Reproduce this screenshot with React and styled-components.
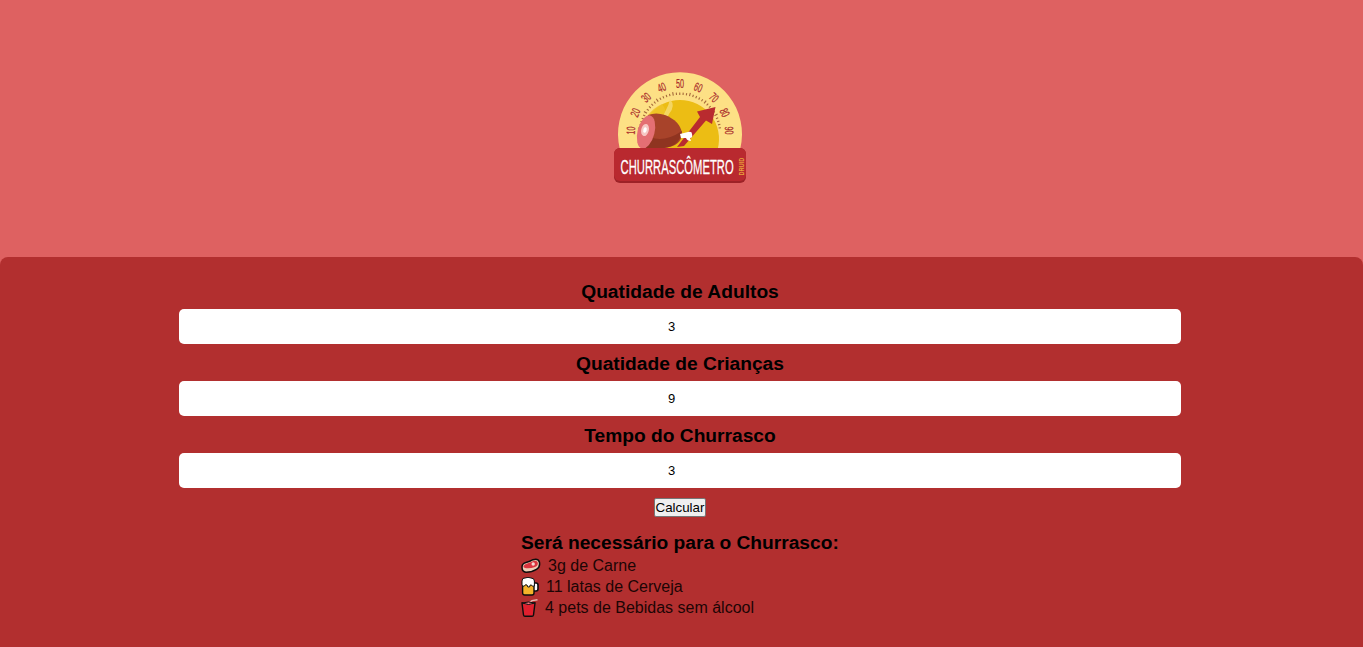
import React from "react";
import styled, { createGlobalStyle } from "styled-components";

const Global = createGlobalStyle`
  html, body { margin: 0; padding: 0; background: #de6161; }
  body { font-family: "Liberation Sans", Arial, sans-serif; color: #000; overflow: hidden; }
`;
const Page = styled.div`
  display: flex;
  flex-direction: column;
  height: 647px;
`;
const Header = styled.header`
  height: 257px;
  flex: none;
  display: flex;
  justify-content: center;
  align-items: flex-start;
  padding: 68px 3px 0 0;
  box-sizing: border-box;
`;
const Main = styled.main`
  flex: 1;
  background: #b22f2f;
  border-radius: 8px 8px 0 0;
  padding: 24px 182px 0 179px;
  display: flex;
  flex-direction: column;
  align-items: center;
`;
const Form = styled.form`
  width: 100%;
  display: flex;
  flex-direction: column;
  align-items: center;
`;
const Label = styled.label`
  font-size: 19.2px;
  font-weight: 700;
  line-height: 22px;
  height: 28px;
  text-align: center;
`;
const Field = styled.input`
  width: 100%;
  height: 35px;
  box-sizing: border-box;
  border: 0;
  border-radius: 5px;
  background: #fff;
  color: #000;
  text-align: center;
  font-family: "Liberation Sans", sans-serif;
  font-size: 13px;
  padding: 0 17px 0 0;
  margin-bottom: 9px;
  outline: none;
`;
const Button = styled.button`
  width: 52px;
  height: 19px;
  margin-top: 1px;
  padding: 0;
  box-sizing: border-box;
  background: #efefef;
  border: 1px solid #767676;
  border-radius: 2px;
  color: #000;
  font-family: "Liberation Sans", Arial, sans-serif;
  font-size: 13.33px;
  line-height: 15px;
`;
const Result = styled.section`
  margin-top: 14px;
  width: 318px;
  display: flex;
  flex-direction: column;
`;
const ResultTitle = styled.h3`
  margin: 0 0 1px;
  font-size: 19.2px;
  line-height: 24px;
  height: 23px;
  font-weight: 700;
  white-space: nowrap;
`;
const Line = styled.div`
  display: flex;
  align-items: center;
  height: 21px;
  font-size: 16px;
  color: #1c0505;
  white-space: nowrap;
`;
const IconSlot = styled.span`
  display: inline-flex;
  width: ${(p) => p.$w}px;
  flex: none;
`;

const dialFont = "'Liberation Sans', sans-serif";

const Logo = () => {
  const nums = [10, 20, 30, 40, 50, 60, 70, 80, 90];
  const ticks = Array.from({ length: 35 }, (_, i) => -82 + i * 4.8);
  return (
    <svg width="140" height="120" viewBox="610 68 140 120">
      <path d="M619.8 149 A62 62 0 1 1 740.2 149Z" fill="#fde085" />
      <path d="M642.3 149 A39 39 0 1 1 717.7 149Z" fill="#ecbd14" />
      <path d="M662 104 Q669 112 662 120 Q657 126 663 133 L642 133 Q644 112 662 104Z" fill="#f0c62c" opacity=".75" />
      <path d="M670 99 Q676 106 669 114 Q665 120 671 127 Q660 121 665 112 Q669 105 670 99Z" fill="#f6d970" opacity=".85" />
      {ticks.map((a, i) => (
        <rect key={a} x="679.5" y={i % 5 === 0 ? 91.5 : 92.5} width="1.1" height={i % 5 === 0 ? 3.5 : 2.4}
          fill="#a5683a" transform={`rotate(${a} 680 134)`} />
      ))}
      {nums.map((n, i) => (
        <g key={n} transform={`rotate(${(i - 4) * 21.8} 680 133) translate(680 88) scale(.6 1)`}>
          <text x="0" y="0" textAnchor="middle" fontFamily={dialFont} fontSize="12" fill="#a92b2b" stroke="#a92b2b" strokeWidth=".2">{n}</text>
        </g>
      ))}
      <path d="M677 147 L700 117 L697 111.5 L715.5 107 L712 124 L706 120.5 L684 146Z" fill="#b92b2f" />
      <path d="M648 115 Q656 112 665 115 Q680 121 682 133 Q682 146 664 148 L642 148 Z" fill="#a8432a" />
      <path d="M650 137 Q664 143 682 131 Q680 146 664 148 L644 148Z" fill="#8f3420" />
      <ellipse cx="646" cy="132" rx="8.5" ry="17" fill="#e46f73" transform="rotate(14 646 132)" />
      <ellipse cx="645" cy="130" rx="3.8" ry="6.2" fill="#f6c7c4" transform="rotate(14 645 130)" />
      <ellipse cx="645" cy="130" rx="1.7" ry="2.8" fill="#fff" transform="rotate(14 645 130)" />
      <path d="M680 134 L688 132 Q692 131 692 134 Q693 138 690 138 L691 141 Q687 141 686 138 L681 138Z" fill="#fff" />
      <rect x="614" y="148" width="132" height="35" rx="6" fill="#9d2227" />
      <rect x="614" y="148" width="132" height="33" rx="6" fill="#b9292f" />
      <g transform="translate(620.5 174) scale(.563 1)">
        <text x="0" y="0" fontFamily={dialFont} fontSize="20" fill="#fff" stroke="#fff" strokeWidth=".25">CHURRASCÔMETRO</text>
      </g>
      <g transform="translate(743.5 175.5) rotate(-90) scale(.8 1)">
        <text x="0" y="0" fontFamily={dialFont} fontWeight="700" fontSize="7" fill="#e9a43c">DRUID</text>
      </g>
    </svg>
  );
};

const Meat = () => (
  <svg width="20" height="15" viewBox="0 0 20 15">
    <path d="M1 9 Q1 5.5 5 4.5 Q9 3.5 12 1.7 Q17 0 18.4 4 Q19.5 9 15.5 11.3 Q11 14.2 5 14.2 Q1 14 1 9Z" fill="#efcdb5" stroke="#0c0c0c" strokeWidth="1.5" />
    <path d="M2.4 8 Q3.4 6 6.4 5.4 Q10 4.4 12.5 3 Q16 2 16.8 4.8 Q17.3 7.6 14 9 Q9 10.7 4 10 Q2.2 9.6 2.4 8Z" fill="#d9353f" />
    <circle cx="12.2" cy="6" r="1.7" fill="#f7d9d0" />
  </svg>
);
const Beer = () => (
  <svg width="18" height="19" viewBox="0 0 18 19">
    <path d="M12 6 H15 Q17 6 17 8 V12 Q17 14 15 14 H12" fill="#fff" stroke="#0c0c0c" strokeWidth="1.6" />
    <rect x="1.6" y="3" width="11.4" height="15" rx="2" fill="#f4b32a" stroke="#0c0c0c" strokeWidth="1.4" />
    <path d="M1 4 Q1 .6 4 1 Q7 -.4 10 1 Q13.4 1 13.4 4 V9 Q11 10 10.5 8 Q9 7 8.5 10 Q6.5 11 6 8 Q4 7 3.5 9 Q1.5 10 1 8Z" fill="#fff" stroke="#0c0c0c" strokeWidth="1" />
  </svg>
);
const Cup = () => (
  <svg width="17" height="18" viewBox="0 0 17 18">
    <path d="M8 4 L11 1.6 L16.5 .8" fill="none" stroke="#e9b5ad" strokeWidth="1.5" />
    <path d="M1 4 H14 L12.5 16 Q12.3 17.3 11 17.3 H4 Q2.7 17.3 2.5 16Z" fill="#e0202e" stroke="#0c0c0c" strokeWidth="1.4" />
    <path d="M1 4 Q7.5 2 14 4 Q7.5 7 1 4Z" fill="#f37a82" stroke="#0c0c0c" strokeWidth="1" />
  </svg>
);

export default function App() {
  return (
    <Page>
      <Global />
      <Header>
        <Logo />
      </Header>
      <Main>
        <Form onSubmit={(e) => e.preventDefault()}>
          <Label htmlFor="a">Quatidade de Adultos</Label>
          <Field id="a" defaultValue="3" />
          <Label htmlFor="c">Quatidade de Crianças</Label>
          <Field id="c" defaultValue="9" />
          <Label htmlFor="t">Tempo do Churrasco</Label>
          <Field id="t" defaultValue="3" />
          <Button type="button">Calcular</Button>
        </Form>
        <Result>
          <ResultTitle>Será necessário para o Churrasco:</ResultTitle>
          <Line><IconSlot $w={27}><Meat /></IconSlot>3g de Carne</Line>
          <Line><IconSlot $w={25}><Beer /></IconSlot>11 latas de Cerveja</Line>
          <Line><IconSlot $w={24}><Cup /></IconSlot>4 pets de Bebidas sem álcool</Line>
        </Result>
      </Main>
    </Page>
  );
}
